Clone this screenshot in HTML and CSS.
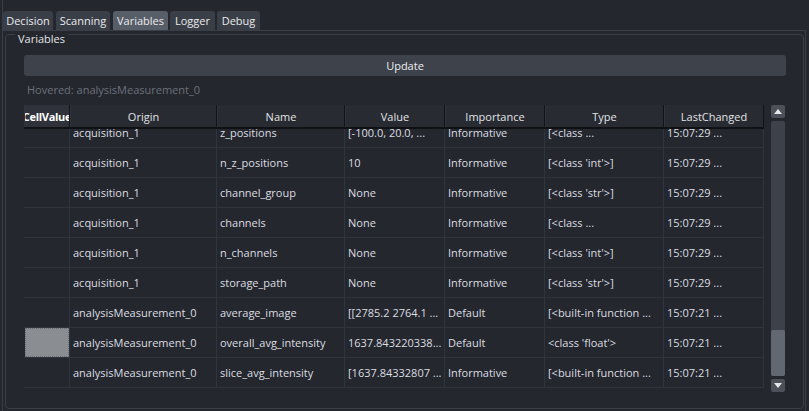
FILE: index.html
```html
<!DOCTYPE html>
<html>
<head>
<meta charset="utf-8">
<link rel="stylesheet" href="styles.css">
</head>
<body>
<div class="window">
  <div class="tabs">
    <div class="tab t1">Decision</div>
    <div class="tab t2">Scanning</div>
    <div class="tab t3 active">Variables</div>
    <div class="tab t4">Logger</div>
    <div class="tab t5">Debug</div>
  </div>
  <div class="pane">
    <div class="group">
      <div class="group-title">Variables</div>
      <div class="group-body">
        <div class="btn">Update</div>
        <div class="hovered">Hovered: analysisMeasurement_0</div>
        <div class="tablewidget">
          <div class="table">
            <div class="row head">
              <div class="c c0 hl"><span>CellValue</span></div>
              <div class="c c1">Origin</div>
              <div class="c c2">Name</div>
              <div class="c c3">Value</div>
              <div class="c c4">Importance</div>
              <div class="c c5">Type</div>
              <div class="c c6">LastChanged</div>
            </div>
            <div class="tbody">
              <div class="row first">
                <div class="c c0"></div><div class="c c1">acquisition_1</div><div class="c c2">z_positions</div><div class="c c3">[-100.0, 20.0, ...</div><div class="c c4">Informative</div><div class="c c5">[&lt;class ...</div><div class="c c6">15:07:29 ...</div>
              </div>
              <div class="row">
                <div class="c c0"></div><div class="c c1">acquisition_1</div><div class="c c2">n_z_positions</div><div class="c c3">10</div><div class="c c4">Informative</div><div class="c c5">[&lt;class 'int'&gt;]</div><div class="c c6">15:07:29 ...</div>
              </div>
              <div class="row">
                <div class="c c0"></div><div class="c c1">acquisition_1</div><div class="c c2">channel_group</div><div class="c c3">None</div><div class="c c4">Informative</div><div class="c c5">[&lt;class 'str'&gt;]</div><div class="c c6">15:07:29 ...</div>
              </div>
              <div class="row">
                <div class="c c0"></div><div class="c c1">acquisition_1</div><div class="c c2">channels</div><div class="c c3">None</div><div class="c c4">Informative</div><div class="c c5">[&lt;class ...</div><div class="c c6">15:07:29 ...</div>
              </div>
              <div class="row">
                <div class="c c0"></div><div class="c c1">acquisition_1</div><div class="c c2">n_channels</div><div class="c c3">None</div><div class="c c4">Informative</div><div class="c c5">[&lt;class 'int'&gt;]</div><div class="c c6">15:07:29 ...</div>
              </div>
              <div class="row">
                <div class="c c0"></div><div class="c c1">acquisition_1</div><div class="c c2">storage_path</div><div class="c c3">None</div><div class="c c4">Informative</div><div class="c c5">[&lt;class 'str'&gt;]</div><div class="c c6">15:07:29 ...</div>
              </div>
              <div class="row">
                <div class="c c0"></div><div class="c c1">analysisMeasurement_0</div><div class="c c2">average_image</div><div class="c c3">[[2785.2 2764.1 ...</div><div class="c c4">Default</div><div class="c c5">[&lt;built-in function ...</div><div class="c c6">15:07:21 ...</div>
              </div>
              <div class="row">
                <div class="c c0"><div class="swatch"></div></div><div class="c c1">analysisMeasurement_0</div><div class="c c2">overall_avg_intensity</div><div class="c c3">1637.843220338...</div><div class="c c4">Default</div><div class="c c5">&lt;class 'float'&gt;</div><div class="c c6">15:07:21 ...</div>
              </div>
              <div class="row">
                <div class="c c0"></div><div class="c c1">analysisMeasurement_0</div><div class="c c2">slice_avg_intensity</div><div class="c c3">[1637.84332807 ...</div><div class="c c4">Informative</div><div class="c c5">[&lt;built-in function ...</div><div class="c c6">15:07:21 ...</div>
              </div>
            </div>
          </div>
          <div class="scrollbar">
            <div class="sb-btn"><svg width="8" height="5" viewBox="0 0 8 5"><path d="M0 5 L4 0 L8 5 Z" fill="#e6e7e9"/></svg></div>
            <div class="sb-track"><div class="sb-handle"></div></div>
            <div class="sb-btn"><svg width="8" height="5" viewBox="0 0 8 5"><path d="M0 0 L8 0 L4 5 Z" fill="#e6e7e9"/></svg></div>
          </div>
        </div>
      </div>
    </div>
  </div>
</div>
</body>
</html>
```

FILE: styles.css
```css
* { box-sizing: border-box; }
html, body {
  margin: 0;
  padding: 0;
  width: 809px;
  height: 411px;
  overflow: hidden;
  background: #24272e;
  font-family: "Open Sans", "Noto Sans", sans-serif;
  font-size: 11px;
  color: #dcdde0;
}
.window {
  margin-left: 2px;
  height: 411px;
  border-left: 1px solid #3a3e46;
  display: flex;
  flex-direction: column;
}
.tabs {
  display: flex;
  gap: 3px;
  padding-top: 11px;
  height: 30px;
}
.tab {
  height: 19px;
  line-height: 19px;
  text-align: center;
  background: #3a3e47;
  border-radius: 3px 3px 0 0;
  color: #e9eaed;
}
.t1 { width: 50px; }
.t2 { width: 54px; }
.t3 { width: 55px; }
.t4 { width: 45px; margin-left: -1px; }
.t5 { width: 43px; margin-left: -1px; }
.tab.active { background: #585e68; }
.pane {
  flex: 1;
  border-top: 1px solid #3a3e46;
  border-right: 1px solid #3a3e46;
  margin-right: 3px;
  display: flex;
  flex-direction: column;
}
.group {
  margin: 3px 1px 2px 2px;
  height: 375px;
  border: 1px solid #3a3e46;
  border-radius: 4px;
  display: flex;
  flex-direction: column;
}
.group-title {
  align-self: flex-start;
  margin: -3px 0 0 9px;
  padding: 0 3px;
  height: 15px;
  line-height: 13px;
  background: #24272e;
  color: #e3e4e7;
}
.group-body {
  flex: 1;
  display: flex;
  flex-direction: column;
  padding: 8px 17px 15px 18px;
}
.btn {
  height: 21px;
  line-height: 21px;
  text-align: center;
  background: #3e434b;
  border-radius: 3px;
  color: #eceef0;
}
.hovered {
  margin-top: 6px;
  padding-left: 3px;
  line-height: 15px;
  color: #6c717a;
}
.tablewidget {
  margin-top: 8px;
  flex: 1;
  display: flex;
  gap: 7px;
}
.table {
  width: 740px;
  display: flex;
  flex-direction: column;
  overflow: hidden;
}
.row {
  display: flex;
  height: 30px;
  border-bottom: 1px solid #30343c;
}
.c {
  flex: none;
  display: flex;
  align-items: center;
  padding-left: 3px;
  white-space: nowrap;
  overflow: hidden;
  border-right: 1px solid #30343c;
  color: #dcdde0;
}
.c0 { width: 46px; }
.c1 { width: 147px; }
.c2 { width: 128px; }
.c3 { width: 100px; }
.c4 { width: 100px; }
.c5 { width: 119px; }
.c6 { width: 100px; }
.row.head {
  height: 24px;
  background: #282b32;
  border-bottom: 2px solid #101114;
}
.row.head .c {
  justify-content: center;
  padding-left: 0;
  border-right: 1px solid #121317;
  border-left: 1px solid #30343c;
  color: #e1e3e6;
}
.row.head .c.hl {
  background: #2f323a;
  color: #ffffff;
  font-weight: bold;
  letter-spacing: -0.3px;
}
.tbody {
  flex: 1;
  overflow: hidden;
}
.row.first { margin-top: -11px; }
.swatch {
  width: 44px;
  height: 29px;
  margin-left: -2px;
  background: #8a8e93;
  border: 1px dotted #6a6d72;
}
.scrollbar {
  width: 14px;
  display: flex;
  flex-direction: column;
  gap: 3px;
  margin-bottom: 1px;
}
.sb-btn {
  height: 13px;
  background: #4b5059;
  border-radius: 2px;
  display: flex;
  align-items: center;
  justify-content: center;
}
.sb-track {
  flex: 1;
  background: #3d424a;
  border-radius: 2px;
  display: flex;
  flex-direction: column;
  justify-content: flex-end;
}
.sb-handle {
  height: 46px;
  background: #626871;
  border-radius: 2px;
}
```
